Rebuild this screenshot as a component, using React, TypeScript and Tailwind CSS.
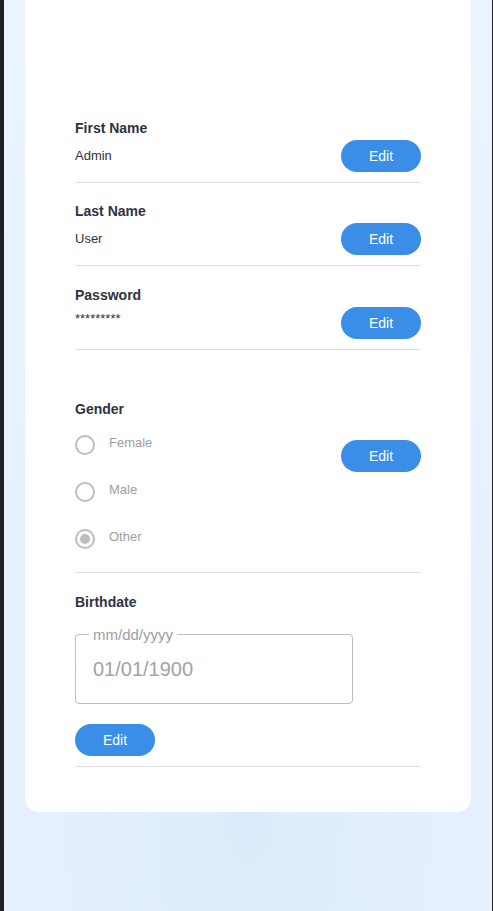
import { useState } from 'react'

type Field = { label: string; value: string; pt: string }

const fields: Field[] = [
  { label: 'First Name', value: 'Admin', pt: 'pt-[120px]' },
  { label: 'Last Name', value: 'User', pt: 'pt-[20px]' },
  { label: 'Password', value: '*********', pt: 'pt-[21px]' },
]

function EditButton() {
  return (
    <button className="h-8 w-20 shrink-0 rounded-full bg-[#3a8ee8] text-[14px] leading-8 text-white">
      Edit
    </button>
  )
}

function Radio({ label, checked }: { label: string; checked?: boolean }) {
  return (
    <label className="flex h-[47px] items-center">
      <span className="flex h-5 w-5 items-center justify-center rounded-full border-2 border-[#bdbdbd]">
        {checked && <span className="h-[10px] w-[10px] rounded-full bg-[#bdbdbd]" />}
      </span>
      <span className="ml-[14px] -mt-1 text-[13px] text-[#9e9e9e]">{label}</span>
    </label>
  )
}

export default function App() {
  const [gender] = useState('Other')

  return (
    <div className="flex min-h-screen w-full font-['Liberation_Sans',Arial,sans-serif]">
      <div className="w-1 shrink-0 bg-[#202124]" />
      <div className="flex-1 bg-[radial-gradient(ellipse_at_50%_85%,#dcebfb_0%,#e3effc_45%,#ebf4fe_100%)] px-[21px] pb-[100px]">
        <div className="rounded-b-[14px] bg-white px-[50px] pb-[45px]">
          {fields.map((f) => (
            <div key={f.label} className={`${f.pt} border-b border-[#e0e0e0] pb-[10px]`}>
              <div className="text-[14px] font-bold leading-4 text-[#2d3340]">{f.label}</div>
              <div className="mt-1 flex items-center justify-between">
                <span
                  className={`text-[13px] text-[#333] ${f.label === 'Password' ? '-mt-[8px]' : ''}`}
                >
                  {f.value}
                </span>
                <EditButton />
              </div>
            </div>
          ))}

          <div className="border-b border-[#e0e0e0] pb-[10px] pt-[51px]">
            <div className="text-[14px] font-bold leading-4 text-[#2d3340]">Gender</div>
            <div className="mt-1 flex items-start justify-between">
              <div className="flex flex-col">
                {['Female', 'Male', 'Other'].map((g) => (
                  <Radio key={g} label={g} checked={g === gender} />
                ))}
              </div>
              <div className="mt-[19px]">
                <EditButton />
              </div>
            </div>
          </div>

          <div className="border-b border-[#e0e0e0] pb-[10px] pt-[21px]">
            <div className="text-[14px] font-bold leading-4 text-[#2d3340]">Birthdate</div>
            <fieldset className="mt-[17px] h-[77px] w-[278px] rounded border border-[#bdbdbd] px-[13px]">
              <legend className="px-[4px] text-[15px] leading-[15px] text-[#9e9e9e]">mm/dd/yyyy</legend>
              <div className="pl-[4px] pt-[15px] text-[20px] leading-6 text-[#a3a3a3]">01/01/1900</div>
            </fieldset>
            <div className="mt-[20px]">
              <EditButton />
            </div>
          </div>
        </div>
      </div>
      <div className="w-px shrink-0 bg-[#202124]" />
    </div>
  )
}
